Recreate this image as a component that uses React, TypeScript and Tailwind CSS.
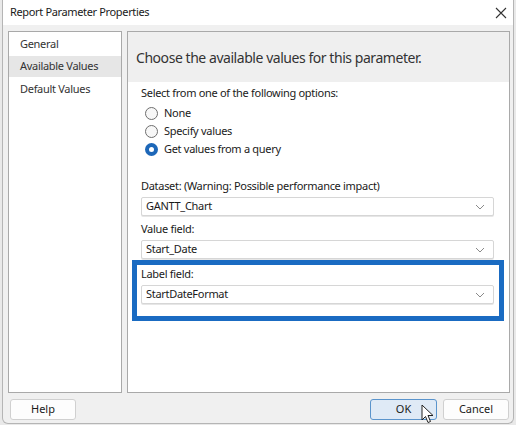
import React from "react";

const font = { fontFamily: '"Noto Sans", "Open Sans", sans-serif' };

function Chevron() {
  return (
    <svg width="10" height="6" viewBox="0 0 10 6" className="shrink-0">
      <path d="M1 1 L5 5 L9 1" fill="none" stroke="#8a8a8a" strokeWidth="1" />
    </svg>
  );
}

function Select({ value }: { value: string }) {
  return (
    <div className="flex h-[19px] w-[353px] items-center justify-between rounded-[2px] border border-[#d6d6d6] bg-white pl-[4px] pr-[8px] text-[11px] tracking-[-0.3px] text-[#1a1a1a] shadow-[0_1px_0_#e6e6e6]">
      <span>{value}</span>
      <Chevron />
    </div>
  );
}

function Radio({ checked, label }: { checked?: boolean; label: string }) {
  return (
    <div className="flex h-[18px] items-center gap-[6px]">
      {checked ? (
        <div className="flex h-[13px] w-[13px] items-center justify-center rounded-full bg-[#1d67b8]">
          <div className="h-[5px] w-[5px] rounded-full bg-white" />
        </div>
      ) : (
        <div className="h-[13px] w-[13px] rounded-full border border-[#6e6e6e] bg-[#f7f7f7]" />
      )}
      <span className="text-[11px] tracking-[-0.3px] text-[#1a1a1a]">{label}</span>
    </div>
  );
}

function Button({ label, primary }: { label: string; primary?: boolean }) {
  return (
    <div
      className={
        primary
          ? "flex h-[21px] w-[67px] items-center justify-center rounded-[3px] border border-[#5a94cc] bg-[#dfeaf6] text-[11px] text-[#1a1a1a]"
          : "flex h-[21px] w-[66px] items-center justify-center rounded-[3px] border border-[#d0d0d0] bg-[#fdfdfd] text-[11px] text-[#1a1a1a]"
      }
    >
      {label}
    </div>
  );
}

export default function App() {
  return (
    <div className="relative h-[425px] w-[516px] overflow-hidden bg-[#e9e9e9]" style={font}>
      <div className="ml-[2px] flex h-[424px] w-[512px] flex-col overflow-hidden rounded-b-[6px] border border-t-0 border-[#b5b5b5] bg-[#f0f0f0]">
        <div className="flex h-[25px] items-center justify-between bg-white pl-[7px] pr-[6px]">
          <span className="text-[11px] tracking-[-0.35px] text-[#1a1a1a]">Report Parameter Properties</span>
          <svg width="12" height="12" viewBox="0 0 12 12">
            <path d="M1 1 L11 11 M11 1 L1 11" stroke="#333" strokeWidth="1.1" />
          </svg>
        </div>
        <div className="flex gap-[5px] pl-[5px] pt-[6px]">
          <div className="flex h-[362px] w-[114px] flex-col border border-[#a9a9a9] bg-white pt-[1px] text-[11px] tracking-[-0.3px] text-[#333]">
            <div className="flex h-[23px] items-center pl-[11px]">General</div>
            <div className="flex h-[21px] items-center bg-[#e6e6e6] pl-[11px]">Available Values</div>
            <div className="flex h-[25px] items-center pl-[11px]">Default Values</div>
          </div>
          <div className="flex h-[362px] w-[383px] flex-col border border-[#a9a9a9] bg-white">
            <div className="flex h-[50px] items-center bg-[#efefef] pl-[8px] text-[14px] tracking-[-0.45px] text-[#333]">
              Choose the available values for this parameter.
            </div>
            <div className="flex flex-col pl-[13px] pt-[1px] text-[11px] tracking-[-0.3px] text-[#1a1a1a]">
              <div className="flex h-[20px] items-center">Select from one of the following options:</div>
              <div className="flex flex-col pl-[4px] pt-[1px]">
                <Radio label="None" />
                <Radio label="Specify values" />
                <Radio checked label="Get values from a query" />
              </div>
              <div className="mt-[18px] flex h-[20px] items-center">
                Dataset: (Warning: Possible performance impact)
              </div>
              <div className="mt-[1px]">
                <Select value="GANTT_Chart" />
              </div>
              <div className="mt-[3px] flex h-[20px] items-center">Value field:</div>
              <div className="mt-[1px]">
                <Select value="Start_Date" />
              </div>
              <div className="-ml-[9px] mt-[1px] flex h-[61px] w-[372px] flex-col border-[5px] border-[#1a6bc2] pl-[4px]">
                <div className="flex h-[18px] items-center">Label field:</div>
                <div className="mt-[2px]">
                  <Select value="StartDateFormat" />
                </div>
              </div>
            </div>
          </div>
        </div>
        <div className="flex items-center justify-between pl-[7px] pr-[4px] pt-[6px]">
          <Button label="Help" />
          <div className="flex gap-[6px]">
            <Button label="OK" primary />
            <Button label="Cancel" />
          </div>
        </div>
      </div>
      <svg className="absolute left-[421px] top-[404px]" width="14" height="21" viewBox="0 0 14 21">
        <path d="M1 1 L1 16 L4.5 12.5 L7 18.5 L9.5 17.5 L7 11.5 L12 11.5 Z" fill="white" stroke="#222" strokeWidth="1" strokeLinejoin="round" />
      </svg>
    </div>
  );
}
